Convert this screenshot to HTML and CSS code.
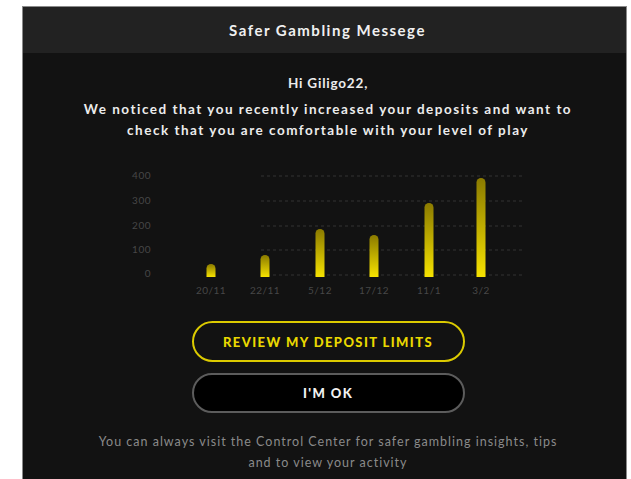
FILE: index.html
```html
<!DOCTYPE html>
<html lang="en">
<head>
<meta charset="utf-8">
<title>Safer Gambling Messege</title>
<link rel="stylesheet" href="styles.css">
</head>
<body>
<div class="panel">
  <div class="panel-header">Safer Gambling Messege</div>
  <div class="panel-body">
    <p class="greeting">Hi Giligo22,</p>
    <p class="message">We noticed that you recently increased your deposits and want to<br>check that you are comfortable with your level of play</p>

    <svg class="chart" width="420" height="140" viewBox="0 0 420 140" aria-label="Deposits chart">
      <defs>
        <linearGradient id="barFill" x1="0" y1="0" x2="0" y2="1">
          <stop offset="0" stop-color="#8a7a00"/>
          <stop offset="1" stop-color="#f6e200"/>
        </linearGradient>
      </defs>
      <g class="grid">
        <line x1="143" y1="15" x2="405" y2="15"/>
        <line x1="143" y1="40" x2="405" y2="40"/>
        <line x1="143" y1="65" x2="405" y2="65"/>
        <line x1="143" y1="89" x2="405" y2="89"/>
        <line x1="143" y1="114" x2="405" y2="114"/>
      </g>
      <g class="axis-y">
        <text x="33" y="15">400</text>
        <text x="33" y="40">300</text>
        <text x="33" y="65">200</text>
        <text x="33" y="89">100</text>
        <text x="33" y="113">0</text>
      </g>
      <g class="bars" fill="url(#barFill)">
        <path d="M88.5 116 V107.5 A4.5 4.5 0 0 1 97.5 107.5 V116 Z"/>
        <path d="M142.5 116 V98.5 A4.5 4.5 0 0 1 151.5 98.5 V116 Z"/>
        <path d="M197.5 116 V72.5 A4.5 4.5 0 0 1 206.5 72.5 V116 Z"/>
        <path d="M251.5 116 V78.5 A4.5 4.5 0 0 1 260.5 78.5 V116 Z"/>
        <path d="M306.5 116 V46.5 A4.5 4.5 0 0 1 315.5 46.5 V116 Z"/>
        <path d="M358.5 116 V21.5 A4.5 4.5 0 0 1 367.5 21.5 V116 Z"/>
      </g>
      <g class="axis-x">
        <text x="93" y="130">20/11</text>
        <text x="147" y="130">22/11</text>
        <text x="202" y="130">5/12</text>
        <text x="256" y="130">17/12</text>
        <text x="311" y="130">11/1</text>
        <text x="363" y="130">3/2</text>
      </g>
    </svg>

    <div class="actions">
      <button class="btn btn-primary" type="button">REVIEW MY DEPOSIT LIMITS</button>
      <button class="btn btn-secondary" type="button">I'M OK</button>
    </div>

    <p class="footnote">You can always visit the Control Center for safer gambling insights, tips<br>and to view your activity</p>
  </div>
</div>
</body>
</html>
```

FILE: styles.css
```css
html, body {
  margin: 0;
  padding: 0;
  background: #ffffff;
}

body {
  font-family: Lato, "Noto Sans", sans-serif;
  overflow: hidden;
}

.panel {
  margin: 6px 0 0 22px;
  width: 603px;
  min-height: 480px;
  border: 1px solid #8a8a8a;
  border-bottom: none;
  background: #121212;
}

.panel-header {
  height: 46px;
  background: #222222;
  display: flex;
  align-items: center;
  justify-content: center;
  padding-left: 6px;
  color: #f0f0f0;
  font-size: 15px;
  font-weight: 700;
  letter-spacing: 1.5px;
}

.panel-body {
  display: flex;
  flex-direction: column;
  align-items: center;
  padding: 20px 0 0 7px;
}

.greeting,
.message {
  margin: 0;
  color: #ececec;
  font-size: 13.5px;
  font-weight: 700;
  line-height: 21px;
  letter-spacing: 1.5px;
  text-align: center;
}

.greeting {
  letter-spacing: 0.8px;
}

.message {
  margin-top: 5px;
}

.chart {
  display: block;
  margin-top: 20px;
}

.grid line {
  stroke: #333333;
  stroke-width: 1;
  stroke-dasharray: 3 3;
}

.axis-y text,
.axis-x text {
  fill: #474747;
  font-family: Lato, "Noto Sans", sans-serif;
  font-size: 10px;
  letter-spacing: 0.5px;
  dominant-baseline: middle;
}

.axis-y text {
  text-anchor: end;
}

.axis-x text {
  text-anchor: middle;
}

.actions {
  display: flex;
  flex-direction: column;
  gap: 11px;
  margin-top: 20px;
}

.btn {
  width: 273px;
  height: 41px;
  border-radius: 21px;
  font-family: Lato, "Noto Sans", sans-serif;
  font-size: 13px;
  font-weight: 900;
  letter-spacing: 1.4px;
  cursor: pointer;
}

.btn-primary {
  background: #121212;
  border: 2px solid #dccb00;
  color: #ead800;
}

.btn-secondary {
  height: 40px;
  background: #000000;
  border: 2px solid #5c5c5c;
  color: #f2f2f2;
}

.footnote {
  margin: 18px 0 0;
  color: #8a8a8a;
  font-size: 12.5px;
  line-height: 21px;
  letter-spacing: 1px;
  text-align: center;
}
```
